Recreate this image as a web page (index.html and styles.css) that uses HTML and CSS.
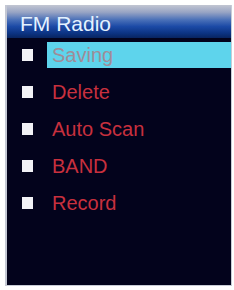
FILE: index.html
```html
<!DOCTYPE html>
<html>
<head>
<meta charset="utf-8">
<link rel="stylesheet" href="styles.css">
</head>
<body>
<div class="frame">
  <div class="header">FM Radio</div>
  <ul class="menu">
    <li class="item active"><span class="box"></span><span class="label">Saving</span></li>
    <li class="item"><span class="box"></span><span class="label">Delete</span></li>
    <li class="item"><span class="box"></span><span class="label">Auto Scan</span></li>
    <li class="item"><span class="box"></span><span class="label">BAND</span></li>
    <li class="item"><span class="box"></span><span class="label">Record</span></li>
  </ul>
</div>
</body>
</html>
```
FILE: styles.css
```css
html, body {
  margin: 0;
  padding: 0;
  background: #ffffff;
}
body {
  width: 234px;
  height: 290px;
  overflow: hidden;
  font-family: "Liberation Sans", Arial, sans-serif;
}
.frame {
  margin: 5px 0 0 5px;
  width: 227px;
  height: 281px;
  box-sizing: border-box;
  background: #03031c;
  border-left: 2px solid #c4c8d4;
  border-right: 1px solid #c8ccd6;
  border-bottom: 1px solid #c8ccd6;
  display: flex;
  flex-direction: column;
}
.header {
  height: 33px;
  box-sizing: border-box;
  padding-left: 13px;
  padding-top: 2px;
  line-height: 33px;
  font-size: 21px;
  color: #e4f2ff;
  background: linear-gradient(to bottom, #c2c6d2 0%, #98a4c4 22%, #4a70b8 45%, #1c4aa6 65%, #0c3484 85%, #082460 100%);
}
.menu {
  list-style: none;
  margin: 4px 0 0 0;
  padding: 0;
  display: flex;
  flex-direction: column;
  gap: 11px;
}
.item {
  height: 26px;
  display: flex;
  align-items: center;
}
.box {
  width: 11px;
  height: 12px;
  margin-left: 15px;
  background: #f2f2f6;
  flex: none;
}
.label {
  margin-left: 14px;
  padding-left: 5px;
  flex: 1;
  height: 26px;
  line-height: 26px;
  font-size: 20px;
  color: #c8303e;
}
.active .label {
  background: #5ed4ec;
  color: #a08c98;
}
```
